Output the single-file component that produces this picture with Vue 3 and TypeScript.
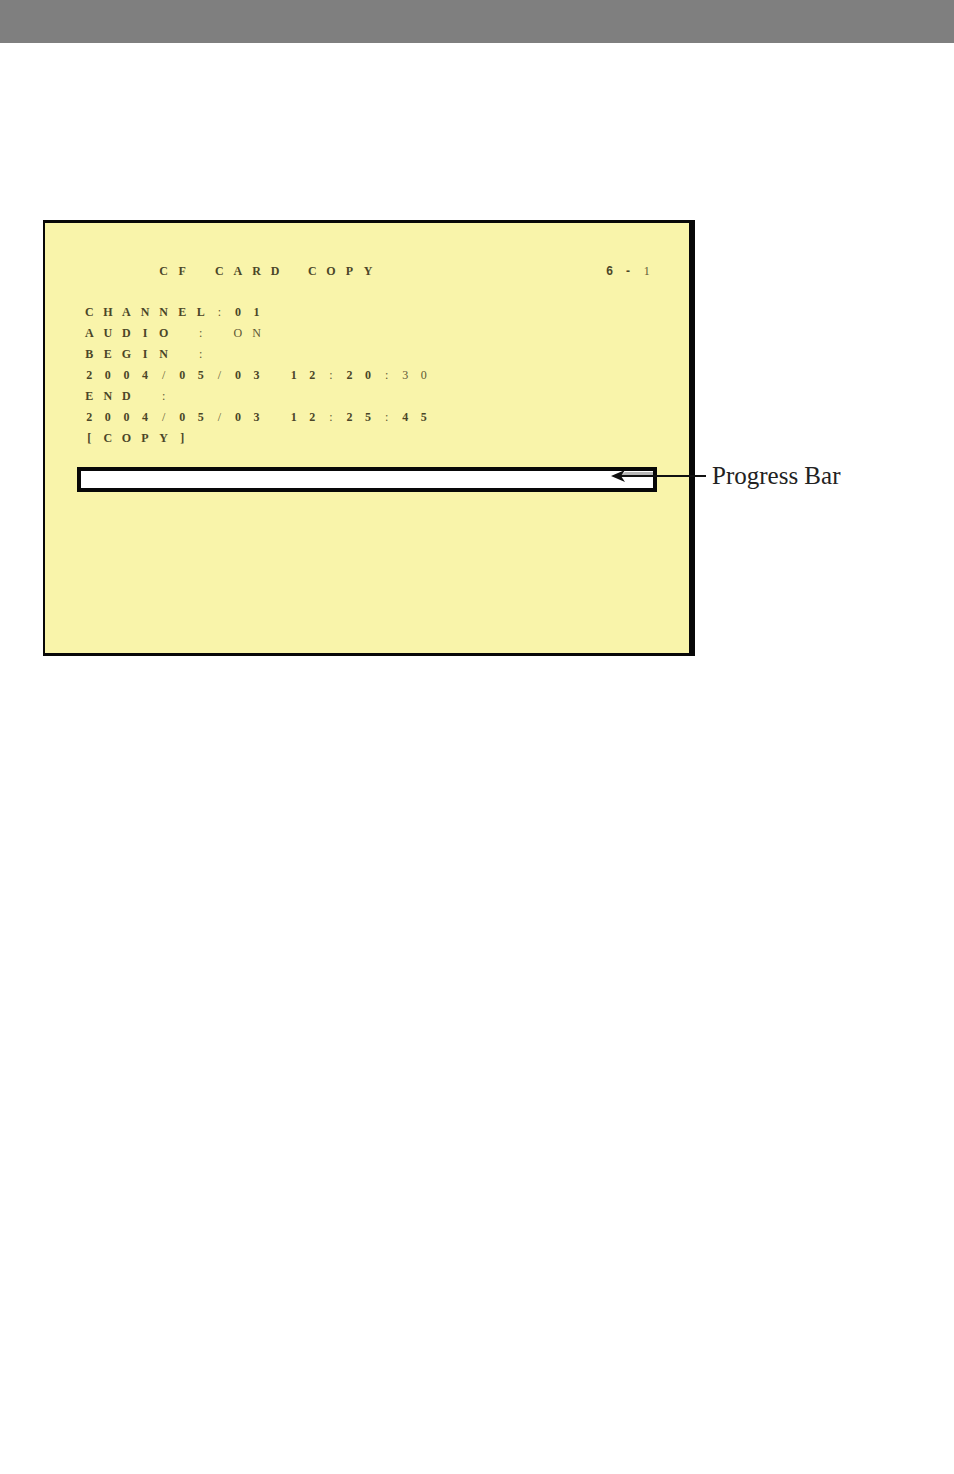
<script setup lang="ts">
interface Run {
  text: string
  tone?: 'light' | 'sans'
}
interface Cell {
  char: string
  tone: string
}

const toCells = (runs: Run[]): Cell[] =>
  runs.flatMap(({ text, tone }) =>
    [...text].map((char) => ({ char, tone: tone ?? (/[:/-]/.test(char) ? 'light' : 'strong') })),
  )

const heading = toCells([
  { text: '    CF CARD COPY'.padEnd(28) },
  { text: '6', tone: 'sans' },
  { text: '-', tone: 'sans' },
  { text: '1', tone: 'light' },
])

const lines = [
  toCells([{ text: 'CHANNEL:01' }]),
  toCells([{ text: 'AUDIO : ' }, { text: 'ON', tone: 'light' }]),
  toCells([{ text: 'BEGIN :' }]),
  toCells([{ text: '2004/05/03 12:20:' }, { text: '30', tone: 'light' }]),
  toCells([{ text: 'END :' }]),
  toCells([{ text: '2004/05/03 12:25:45' }]),
  toCells([{ text: '[COPY]' }]),
]
</script>

<template>
  <header class="band"></header>
  <main class="page">
    <section class="screen">
      <h1 class="line heading">
        <span v-for="(cell, i) in heading" :key="i" :class="cell.tone">{{ cell.char }}</span>
      </h1>
      <p v-for="(line, n) in lines" :key="n" class="line">
        <span v-for="(cell, i) in line" :key="i" :class="cell.tone">{{ cell.char }}</span>
      </p>
      <div class="bar-row">
        <progress id="copy-progress" class="bar" value="0" max="100"></progress>
        <label class="callout" for="copy-progress">
          <svg class="arrow" width="95" height="14" viewBox="0 0 95 14" aria-hidden="true">
            <path d="M14 3H42V6H10Z" fill="#b8b8b8" />
            <path d="M5 7H95" stroke="#111" stroke-width="2" />
            <path d="M0 7L14 1L10 7L14 13Z" fill="#111" />
          </svg>
          <span>Progress Bar</span>
        </label>
      </div>
    </section>
  </main>
</template>

<style>
body {
  margin: 0;
  background: #fff;
}
</style>

<style scoped>
.band {
  height: 43px;
  background: #7f7f7f;
}
.page {
  padding: 177px 259px 40px 43px;
}
.screen {
  box-sizing: border-box;
  padding: 38px 32px 161px;
  border: solid #080808;
  border-width: 3px 6px 3px 2px;
  background: #f9f4aa;
}
.line {
  display: grid;
  grid-template-columns: repeat(31, minmax(0, 1fr));
  height: 21px;
  margin: 0;
  padding: 0 1px 0 3px;
  color: #4b4628;
  font: bold 12px/21px "Liberation Serif", "Times New Roman", serif;
  text-align: center;
  white-space: pre;
}
.heading {
  margin-bottom: 20px;
}
.heading span:last-child {
  grid-column: 31;
}
.light {
  color: #5e5735;
  font-weight: normal;
}
.sans {
  font-family: "Liberation Sans", Arial, sans-serif;
}
.bar-row {
  position: relative;
  margin-top: 18px;
}
.bar {
  display: block;
  box-sizing: border-box;
  width: 100%;
  height: 25px;
  border: 4px solid #080808;
  background: #fff;
  appearance: none;
}
.bar::-webkit-progress-bar {
  background: #fff;
}
.callout {
  position: absolute;
  top: -5px;
  left: calc(100% - 46px);
  display: flex;
  align-items: center;
  gap: 6px;
  color: #222;
  font: 25px/28px "Liberation Serif", "Times New Roman", serif;
  white-space: nowrap;
}
.arrow {
  flex: none;
}
</style>
